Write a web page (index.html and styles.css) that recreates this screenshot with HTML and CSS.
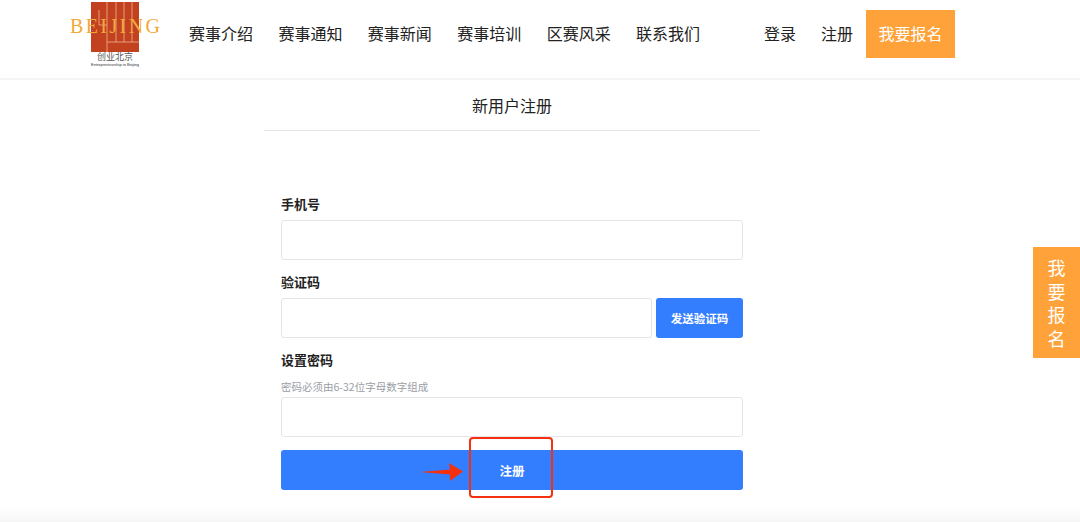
FILE: index.html
```html
<!DOCTYPE html>
<html lang="zh-CN">
<head>
    <meta charset="UTF-8">
    <meta name="viewport" content="width=device-width, initial-scale=1.0">
    <title>新用户注册</title>
    <link rel="stylesheet" href="styles.css">
</head>
<body>
    <header class="header">
        <div class="logo">
            <svg class="logo-mark" width="48" height="50" viewBox="0 0 48 50">
                <rect width="48" height="50" fill="#c2421f"/>
                <path d="M8 8V23H16M16 0V50M25 0V40M33 0V40M41 0V40M16 40H48" fill="none" stroke="#e89a7c" stroke-width="1"/>
            </svg>
            <span class="logo-word">BEIJING</span>
            <span class="logo-cn">创业北京</span>
            <span class="logo-en">Entrepreneurship in Beijing</span>
        </div>
        <nav class="nav">
            <a>赛事介绍</a>
            <a>赛事通知</a>
            <a>赛事新闻</a>
            <a>赛事培训</a>
            <a>区赛风采</a>
            <a>联系我们</a>
        </nav>
        <div class="user-links">
            <a>登录</a>
            <a>注册</a>
            <a class="signup-btn">我要报名</a>
        </div>
    </header>

    <main class="panel">
        <h1 class="panel-title">新用户注册</h1>
        <form class="form">
            <div class="form-group">
                <label>手机号</label>
                <input type="text" class="input">
            </div>
            <div class="form-group">
                <label>验证码</label>
                <div class="code-row">
                    <input type="text" class="input">
                    <button type="button" class="btn code-btn">发送验证码</button>
                </div>
            </div>
            <div class="form-group">
                <label>设置密码</label>
                <p class="hint">密码必须由6-32位字母数字组成</p>
                <input type="password" class="input">
            </div>
            <div class="submit-wrap">
                <button type="button" class="btn submit-btn">注册</button>
                <svg class="mark-arrow" width="43" height="18" viewBox="0 0 43 18">
                    <path d="M0 9L30 6.500L29 0L43 8.500L30 18L30 11.500Z" fill="#f5300f"/>
                </svg>
                <div class="mark-box"></div>
            </div>
        </form>
    </main>

    <a class="side-signup">我<br>要<br>报<br>名</a>
    <div class="bottom-fade"></div>
</body>
</html>
```

FILE: styles.css
```css
* {
    box-sizing: border-box;
}

html, body {
    height: 100%;
}

body {
    margin: 0;
    background-color: #fff;
    color: #222;
    font-family: "Noto Sans CJK SC", "Liberation Sans", sans-serif;
    overflow: hidden;
}

.header {
    display: flex;
    align-items: flex-start;
    height: 80px;
    padding-left: 70px;
    border-bottom: 2px solid #f5f5f5;
}

.logo {
    position: relative;
    width: 90px;
    height: 70px;
    flex-shrink: 0;
}

.logo-mark {
    position: absolute;
    left: 21px;
    top: 2px;
}

.logo-word {
    position: absolute;
    left: 0;
    top: 14px;
    width: 90px;
    font-family: "Liberation Serif", serif;
    font-size: 20px;
    line-height: 24px;
    letter-spacing: 2.400px;
    white-space: nowrap;
    color: #f2a93b;
}

.logo-cn {
    position: absolute;
    left: 21px;
    top: 52px;
    width: 48px;
    font-size: 9px;
    line-height: 10px;
    text-align: center;
    color: #555;
}

.logo-en {
    position: absolute;
    left: 11px;
    top: 62px;
    width: 68px;
    font-family: "Liberation Sans", sans-serif;
    font-size: 4px;
    line-height: 5px;
    text-align: center;
    color: #333;
}

.nav {
    display: flex;
    gap: 25.400px;
    margin-left: 29px;
    padding-top: 21px;
    font-size: 16px;
    line-height: 24px;
}

.user-links {
    display: flex;
    align-items: flex-start;
    margin-left: 64px;
    font-size: 16px;
    line-height: 24px;
}

.user-links a {
    margin-right: 25px;
    padding-top: 21px;
}

.user-links a + a {
    margin-right: 13px;
}

.user-links .signup-btn {
    width: 89px;
    height: 48px;
    margin: 10px 0 0;
    padding-top: 11px;
    text-align: center;
    background-color: #ffa23a;
    color: #fff;
}

.panel {
    width: 496px;
    margin-left: 264px;
}

.panel-title {
    height: 51px;
    margin: 0;
    border-bottom: 1px solid #e5e5e5;
    font-size: 16px;
    font-weight: 400;
    line-height: 50px;
    text-align: center;
}

.form {
    padding: 64px 17px 0;
}

.form-group {
    margin-bottom: 13px;
}

.form-group label {
    display: block;
    margin-bottom: 7px;
    font-size: 13px;
    font-weight: 700;
    line-height: 18px;
}

.input {
    display: block;
    width: 100%;
    height: 40px;
    padding: 0 10px;
    border: 1px solid #e4e5ea;
    border-radius: 3px;
    background-color: #fff;
}

.code-row {
    display: flex;
    gap: 4px;
}

.code-row .input {
    flex: 1;
    min-width: 0;
}

.hint {
    margin: 11px 0 3px;
    font-size: 10.500px;
    line-height: 14px;
    color: #9a9ea6;
}

.btn {
    height: 40px;
    border: 0;
    border-radius: 3px;
    background-color: #337eff;
    color: #fff;
    font-family: inherit;
    font-size: 11.500px;
    font-weight: 700;
}

.code-btn {
    width: 87px;
    flex-shrink: 0;
    padding: 0;
}

.submit-wrap {
    position: relative;
}

.submit-btn {
    display: block;
    width: 100%;
    font-size: 12.500px;
}

.mark-arrow {
    position: absolute;
    left: 139px;
    top: 13px;
}

.mark-box {
    position: absolute;
    left: 188px;
    top: -13px;
    width: 84px;
    height: 61px;
    border: 2px solid #f5300f;
    border-radius: 4px;
}

.side-signup {
    position: absolute;
    right: 0;
    top: 247px;
    width: 47px;
    height: 111px;
    padding-top: 9px;
    background-color: #ffa23a;
    color: #fff;
    font-size: 18px;
    line-height: 23.700px;
    text-align: center;
}

.bottom-fade {
    position: absolute;
    left: 0;
    right: 0;
    bottom: 0;
    height: 16px;
    background: linear-gradient(to bottom, #fff, #f6f6f6);
}
```
